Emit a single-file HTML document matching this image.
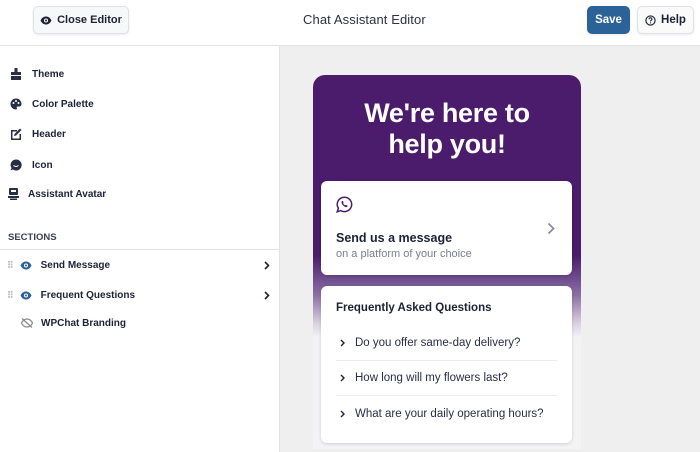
<!DOCTYPE html>
<html><head><meta charset="utf-8"><style>
*{box-sizing:border-box;margin:0;padding:0}
body{width:700px;height:452px;overflow:hidden;font-family:"Liberation Sans",sans-serif;background:#efefef;position:relative;color:#1e2235}
.hdr{position:absolute;left:0;top:0;width:700px;height:46px;background:#fff;border-bottom:1px solid #e3e3e6}
.btn{position:absolute;top:6px;height:28px;border:1px solid #dfe1e6;border-radius:5px;background:#f7f8fa;font-size:11.5px;font-weight:bold;display:flex;align-items:center;justify-content:center;gap:5px;box-shadow:0 1px 2px rgba(0,0,0,.08)}
.side{position:absolute;left:0;top:46px;width:280px;height:406px;background:#fff;border-right:1px solid #e3e3e6}
.it{position:absolute;left:0;font-size:10px;font-weight:bold;display:flex;align-items:center;height:14px}
.panel{position:absolute;left:313px;top:75px;width:268px;height:374px;border-radius:12px 12px 0 0;background:linear-gradient(#4a1c6b 0,#4a1c6b 180px,#8a6fa5 220px,#d8d0e0 248px,#f3f3f6 262px)}
.card{position:absolute;left:8px;width:251px;background:#fff;border-radius:6px;box-shadow:0 1px 3px rgba(0,0,0,.15)}
.q{display:flex;align-items:center;height:35px;font-size:11.5px;color:#2a2d45;border-bottom:1px solid #ececef}
.q svg{margin:0 10px 0 4px}
</style></head><body>
<div class="hdr">
 <div class="btn" style="left:33px;width:96px;font-weight:normal;font-size:12px"><svg width="12" height="9" viewBox="0 0 12 9"><path d="M0.5 4.5C2 1.5 4 0.5 6 0.5S10 1.5 11.5 4.5C10 7.5 8 8.5 6 8.5S2 7.5 0.5 4.5Z" fill="#1e2235"/><circle cx="6" cy="4.5" r="2" fill="#fff"/><circle cx="6" cy="4.5" r="1" fill="#1e2235"/></svg><span style="font-weight:bold;font-size:11px">Close Editor</span></div>
 <div style="position:absolute;left:303px;top:12px;font-size:13px;color:#2c2f45;letter-spacing:.1px">Chat Assistant Editor</div>
 <div class="btn" style="left:587px;width:43px;background:#2b6399;color:#fff;border-color:#2b6399">Save</div>
 <div class="btn" style="left:637px;width:57px;background:#fafafa"><svg width="11" height="11" viewBox="0 0 12 12"><circle cx="6" cy="6" r="5" fill="none" stroke="#1e2235" stroke-width="1.3"/><path d="M4.5 4.6a1.5 1.5 0 1 1 2 1.4c-.4.2-.5.5-.5.9" fill="none" stroke="#1e2235" stroke-width="1.2"/><circle cx="6" cy="8.6" r=".7" fill="#1e2235"/></svg>Help</div>
</div>
<div class="side">
 <div class="it" style="top:21px;left:10px"><svg width="12" height="12" viewBox="0 0 12 12"><rect x="4.5" y="0" width="3" height="4" fill="#2a2e45"/><rect x="1" y="4" width="10" height="3" fill="#2a2e45"/><rect x="1" y="8" width="10" height="4" fill="#2a2e45"/></svg><span style="margin-left:10px">Theme</span></div>
 <div class="it" style="top:51px;left:10px"><svg width="12" height="12" viewBox="0 0 12 12"><path d="M6 0.5a5.5 5.5 0 0 0 0 11c1 0 1.2-.8.8-1.5-.4-.8.2-1.5 1-1.5h1.2c1.5 0 2.5-1 2.5-2.5C11.5 2.8 9 .5 6 .5Z" fill="#2a2e45"/><circle cx="3.5" cy="5" r="1" fill="#fff"/><circle cx="6" cy="3" r="1" fill="#fff"/><circle cx="8.5" cy="5" r="1" fill="#fff"/></svg><span style="margin-left:10px">Color Palette</span></div>
 <div class="it" style="top:81px;left:10px"><svg width="12" height="12" viewBox="0 0 12 12"><path d="M1 2h6v1.5H2.5v7h7V6H11v6H1Z" fill="#2a2e45"/><path d="M4 8l.5-2L10 .5l1.5 1.5L6 7.5Z" fill="#2a2e45"/></svg><span style="margin-left:10px">Header</span></div>
 <div class="it" style="top:112px;left:10px"><svg width="12" height="12" viewBox="0 0 12 12"><path d="M6 .5a5.5 5.5 0 1 1-3 10L.5 11.5l1-2.5A5.5 5.5 0 0 1 6 .5Z" fill="#2a2e45"/><path d="M3.5 6.5q2.5 2 5 0" stroke="#fff" fill="none" stroke-width="1"/></svg><span style="margin-left:10px">Icon</span></div>
 <div class="it" style="top:141px;left:8px"><svg width="11" height="12" viewBox="0 0 11 12"><rect x="1" y="0" width="9" height="7" rx="1" fill="#2a2e45"/><rect x="3" y="2" width="5" height="2" fill="#fff"/><rect x="0" y="8" width="11" height="2" fill="#2a2e45"/><rect x="2" y="10.5" width="7" height="1.5" fill="#2a2e45"/></svg><span style="margin-left:9px">Assistant Avatar</span></div>
 <div style="position:absolute;left:8px;top:186px;font-size:9.5px;font-weight:bold;color:#3c4055">SECTIONS</div>
 <div style="position:absolute;left:0;top:203px;width:279px;border-top:1px solid #e3e3e6"></div>
 <div class="it" style="top:212px;left:7px;width:263px"><span style="color:#bbb;font-size:9px;letter-spacing:-1px">⠿</span><svg style="margin-left:7px" width="12" height="9" viewBox="0 0 12 9"><path d="M0.5 4.5C2 1.5 4 0.5 6 0.5S10 1.5 11.5 4.5C10 7.5 8 8.5 6 8.5S2 7.5 0.5 4.5Z" fill="#2b6399"/><circle cx="6" cy="4.5" r="2" fill="#fff"/><circle cx="6" cy="4.5" r="1" fill="#2b6399"/></svg><span style="margin-left:9px">Send Message</span><svg style="margin-left:auto" width="6" height="9" viewBox="0 0 6 9"><path d="M1 1l3.5 3.5L1 8" fill="none" stroke="#1e2235" stroke-width="1.6"/></svg></div>
 <div class="it" style="top:242px;left:7px;width:263px"><span style="color:#bbb;font-size:9px;letter-spacing:-1px">⠿</span><svg style="margin-left:7px" width="12" height="9" viewBox="0 0 12 9"><path d="M0.5 4.5C2 1.5 4 0.5 6 0.5S10 1.5 11.5 4.5C10 7.5 8 8.5 6 8.5S2 7.5 0.5 4.5Z" fill="#2b6399"/><circle cx="6" cy="4.5" r="2" fill="#fff"/><circle cx="6" cy="4.5" r="1" fill="#2b6399"/></svg><span style="margin-left:9px">Frequent Questions</span><svg style="margin-left:auto" width="6" height="9" viewBox="0 0 6 9"><path d="M1 1l3.5 3.5L1 8" fill="none" stroke="#1e2235" stroke-width="1.6"/></svg></div>
 <div class="it" style="top:270px;left:21px"><svg width="12" height="10" viewBox="0 0 12 10"><path d="M0.5 5C2 2 4 1 6 1S10 2 11.5 5C10 8 8 9 6 9S2 8 .5 5Z" fill="none" stroke="#888" stroke-width="1.2"/><path d="M1 0.5L11 9.5" stroke="#888" stroke-width="1.2"/></svg><span style="margin-left:8px">WPChat Branding</span></div>
</div>
<div class="panel">
 <div style="position:absolute;left:0;width:268px;top:23px;text-align:center;color:#fff;font-size:27px;font-weight:bold;line-height:31px;letter-spacing:-.3px">We're here to<br>help you!</div>
 <div class="card" style="top:106px;height:94px">
  <svg style="position:absolute;left:15px;top:15px" width="17" height="17" viewBox="0 0 17 17"><path d="M8.5 1.2a7.2 7.2 0 1 1-3.7 13.4L1.2 15.8l1.2-3.5A7.2 7.2 0 0 1 8.5 1.2Z" fill="none" stroke="#4a1c6b" stroke-width="1.5"/><path d="M6 5c.5-.3 1 0 1.2.6l.3.9c.1.4-.4.7-.3 1 .4.8 1 1.4 1.8 1.8.3.1.6-.4 1-.3l.9.3c.6.2.8.8.5 1.2-.5.6-1.3.8-2 .5-1.7-.7-3-2-3.7-3.7-.3-.7-.2-1.7.3-2.3Z" fill="#4a1c6b"/></svg>
  <div style="position:absolute;left:15px;top:50px;font-size:12.5px;font-weight:bold;color:#1e2235">Send us a message</div>
  <div style="position:absolute;left:15px;top:67px;font-size:11px;color:#7a7d8e">on a platform of your choice</div>
  <svg style="position:absolute;right:17px;top:41px" width="8" height="13" viewBox="0 0 8 13"><path d="M1.5 1.5l5 5-5 5" fill="none" stroke="#8a8c99" stroke-width="1.8"/></svg>
 </div>
 <div class="card" style="top:211px;height:157px;padding:15px 15px 0 15px">
  <div style="font-size:11.5px;font-weight:bold;color:#1e2235;height:25px;line-height:14px">Frequently Asked Questions</div>
  <div class="q"><svg width="5" height="8" viewBox="0 0 5 8"><path d="M1 1l3 3-3 3" fill="none" stroke="#1e2235" stroke-width="1.4"/></svg>Do you offer same-day delivery?</div>
  <div class="q"><svg width="5" height="8" viewBox="0 0 5 8"><path d="M1 1l3 3-3 3" fill="none" stroke="#1e2235" stroke-width="1.4"/></svg>How long will my flowers last?</div>
  <div class="q" style="border:0"><svg width="5" height="8" viewBox="0 0 5 8"><path d="M1 1l3 3-3 3" fill="none" stroke="#1e2235" stroke-width="1.4"/></svg>What are your daily operating hours?</div>
 </div>
</div>
</body></html>
